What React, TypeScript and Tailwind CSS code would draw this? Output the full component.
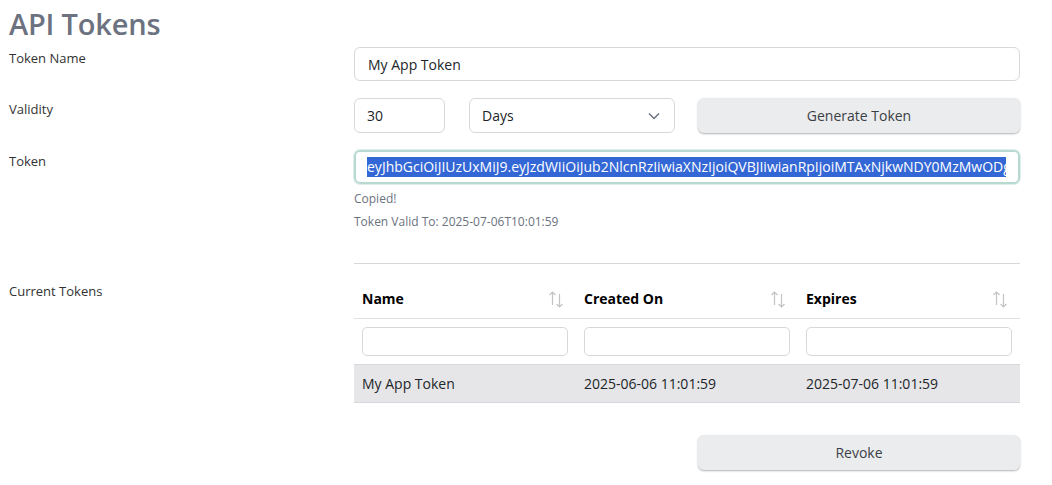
import React from "react";

const SortIcon = () => (
  <svg width="16" height="20" viewBox="0 0 16 20" fill="none" stroke="#c4c4c4" strokeWidth="1.2">
    <path d="M4.5 16V3M1.5 6l3-3 3 3" />
    <path d="M11.5 5v13M8.5 15l3 3 3-3" />
  </svg>
);

export default function App() {
  const font = { fontFamily: '"Open Sans", "Noto Sans", sans-serif' };
  const token =
    "eyJhbGciOiJIUzUxMiJ9.eyJzdWIiOiJub2NlcnRzIiwiaXNzIjoiQVBJIiwianRpIjoiMTAxNjkwNDY0MzMwODgzNTYzIiwiaWF0IjoxNzQ5MjAwMTE5fQ";
  return (
    <div className="w-[1052px] h-[485px] bg-white text-[#212529] font-['Open_Sans',sans-serif] overflow-hidden" style={font}>
      <div className="pl-[9px] pr-[32px]">
        <h1 className="text-[29px] font-semibold text-[#6c727f] leading-[47px] tracking-[-0.2px]">API Tokens</h1>
        <div className="grid grid-cols-[345px_666px] text-[13px]">
          {/* Token name */}
          <div className="pt-[2px] text-[#333]">Token Name</div>
          <div className="pb-[17px]">
            <div className="h-[34px] border border-[#d6d8db] rounded-[6px] flex items-center px-[13px] text-[14px] text-[#212529]">My App Token</div>
          </div>
          {/* Validity */}
          <div className="pt-[2px] text-[#333]">Validity</div>
          <div className="pb-[17px] flex">
            <div className="w-[91px] h-[35px] border border-[#d6d8db] rounded-[6px] flex items-center px-[12px] text-[14px]">30</div>
            <div className="ml-[24px] w-[206px] h-[35px] border border-[#d6d8db] rounded-[6px] flex items-center justify-between pl-[12px] pr-[14px] text-[14px]">
              <span>Days</span>
              <svg width="12" height="8" viewBox="0 0 12 8" fill="none" stroke="#6b7280" strokeWidth="1.5"><path d="M1 1.5l5 5 5-5" /></svg>
            </div>
            <div className="ml-[23px] flex-1 h-[35px] rounded-[6px] bg-[#ebecee] shadow-[0_1px_2px_rgba(0,0,0,0.3)] flex items-center justify-center text-[14px] text-[#3b3f45]">Generate Token</div>
          </div>
          {/* Token */}
          <div className="pt-[2px] text-[#333]">Token</div>
          <div className="pb-[33px]">
            <div className="h-[34px] border-2 border-[#b8d9d2] rounded-[6px] shadow-[0_0_0_1px_#e0efec] flex items-center pl-[11px] pr-[12px] overflow-hidden text-[14px]">
              <span className="bg-[#3367d6] text-white whitespace-nowrap overflow-hidden leading-[20px]">{token}</span>
            </div>
            <div className="mt-[6px] text-[12px] text-[#6b7280] leading-[17px]">Copied!</div>
            <div className="mt-[6px] text-[12px] text-[#6b7280] leading-[17px]">Token Valid To: 2025-07-06T10:01:59</div>
          </div>
          {/* Current tokens */}
          <div className="pt-[19px] text-[#333]">Current Tokens</div>
          <div>
            <div className="border-t border-[#d6d8db]" />
            <div className="grid grid-cols-3 mt-[15px] border-b border-[#dee0e3]">
              {["Name", "Created On", "Expires"].map((h) => (
                <div key={h} className="h-[39px] flex items-center justify-between px-[8px] text-[14px] font-bold text-black">
                  <span>{h}</span>
                  <span className="pr-[4px]"><SortIcon /></span>
                </div>
              ))}
            </div>
            <div className="grid grid-cols-3 py-[8px]">
              {[0, 1, 2].map((i) => (
                <div key={i} className="px-[8px]">
                  <div className="h-[29px] border border-[#d6d8db] rounded-[5px]" />
                </div>
              ))}
            </div>
            <div className="grid grid-cols-3 bg-[#e6e6e8] border-t border-b border-[#d6d8db] h-[39px] items-center text-[14px] text-[#212529]">
              <div className="px-[8px]">My App Token</div>
              <div className="px-[8px]">2025-06-06 11:01:59</div>
              <div className="px-[8px]">2025-07-06 11:01:59</div>
            </div>
            <div className="flex justify-end mt-[32px]">
              <div className="w-[322px] h-[35px] rounded-[6px] bg-[#ebecee] shadow-[0_1px_2px_rgba(0,0,0,0.3)] flex items-center justify-center text-[14px] text-[#3b3f45]">Revoke</div>
            </div>
          </div>
        </div>
      </div>
    </div>
  );
}
